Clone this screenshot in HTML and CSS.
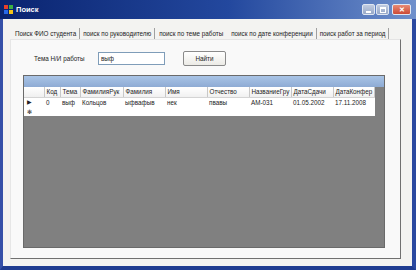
FILE: index.html
```html
<!DOCTYPE html>
<html lang="ru">
<head>
    <meta charset="UTF-8">
    <title>Поиск</title>
    <link rel="stylesheet" href="styles.css">
</head>
<body>

    <div class="window">
        <div class="titlebar">
            <svg class="app-icon" width="9" height="9" viewBox="0 0 9 9">
                <rect x="0" y="0" width="4" height="4" fill="#e8402a"/>
                <rect x="5" y="0" width="4" height="4" fill="#3cb043"/>
                <rect x="0" y="5" width="4" height="4" fill="#2a6ae8"/>
                <rect x="5" y="5" width="4" height="4" fill="#f5c518"/>
            </svg>
            <span class="title">Поиск</span>
            <div class="controls">
                <span class="ctl ctl-min"><span class="bar"></span></span>
                <span class="ctl ctl-max"><span class="box"></span></span>
                <span class="ctl ctl-close">&#x2715;</span>
            </div>
        </div>

        <div class="client">
            <div class="tabs">
                <span class="tab">Поиск ФИО студента</span>
                <span class="tab">поиск по руководителю</span>
                <span class="tab active">поиск по теме работы</span>
                <span class="tab">поиск по дате конференции</span>
                <span class="tab">поиск работ за период</span>
            </div>

            <div class="panel">
                <div class="search-row">
                    <span class="label">Тема Н/И работы</span>
                    <span class="input">выф</span>
                    <span class="button">Найти</span>
                </div>

                <div class="grid">
                    <div class="grid-caption"></div>
                    <table class="data">
                        <colgroup>
                            <col style="width:20px"><col style="width:16px"><col style="width:20px">
                            <col style="width:43px"><col style="width:42px"><col style="width:42px">
                            <col style="width:42px"><col style="width:42px"><col style="width:42px">
                            <col style="width:41px">
                        </colgroup>
                        <thead>
                            <tr>
                                <th class="rowhead"></th>
                                <th>Код</th>
                                <th>Тема</th>
                                <th>ФамилияРук</th>
                                <th>Фамилия</th>
                                <th>Имя</th>
                                <th>Отчество</th>
                                <th>НазваниеГру</th>
                                <th>ДатаСдачи</th>
                                <th>ДатаКонфер</th>
                            </tr>
                        </thead>
                        <tbody>
                            <tr>
                                <td class="rowhead">&#9654;</td>
                                <td>0</td>
                                <td>выф</td>
                                <td>Кольцов</td>
                                <td>ыфвафыв</td>
                                <td>нек</td>
                                <td>пвавы</td>
                                <td>АМ-031</td>
                                <td>01.05.2002</td>
                                <td>17.11.2008</td>
                            </tr>
                            <tr class="new-row">
                                <td class="rowhead">&#x273B;</td>
                                <td></td><td></td><td></td><td></td><td></td>
                                <td></td><td></td><td></td><td></td>
                            </tr>
                        </tbody>
                    </table>
                </div>
            </div>
        </div>
    </div>

</body>
</html>
```

FILE: styles.css
```css
* {
    box-sizing: border-box;
}

body {
    margin: 0;
    font-family: "Liberation Sans", Arial, sans-serif;
    font-size: 6.3px;
    color: #222;
    background: #ffffff;
}

.window {
    width: 416px;
    height: 270px;
    display: flex;
    flex-direction: column;
    border-left: 3px solid #3550a8;
    border-right: 4px solid #2a48a0;
    border-bottom: 4px solid #1f3c90;
    background: #f3f3f1;
}

/* Barra de titulo */
.titlebar {
    height: 19px;
    margin-left: -3px;
    margin-right: -4px;
    padding-left: 4px;
    display: flex;
    align-items: center;
    background: linear-gradient(to right, #0a2470, #23489e 55%, #6f90cc);
}

.app-icon {
    flex: none;
}

.title {
    margin-left: 3px;
    color: #ffffff;
    font-weight: bold;
    font-size: 7.5px;
}

.controls {
    margin-left: auto;
    margin-right: 5px;
    display: flex;
    gap: 1px;
}

.ctl {
    width: 13px;
    height: 11px;
    border: 1px solid #dfe6f2;
    border-radius: 2px;
    background: linear-gradient(#c0cbe0, #97a8c8);
    display: flex;
    align-items: center;
    justify-content: center;
}

.ctl-min .bar {
    width: 5px;
    height: 2px;
    margin-top: 4px;
    background: #ffffff;
}

.ctl-max .box {
    width: 6px;
    height: 6px;
    border: 1px solid #ffffff;
    border-top-width: 2px;
}

.ctl-close {
    width: 19px;
    margin-left: 2px;
    background: linear-gradient(#e88a74, #cc4a36);
    color: #ffffff;
    font-size: 7px;
    font-weight: bold;
}

/* Area cliente */
.client {
    flex: 1;
    padding: 9px 11px 7px 7px;
    display: flex;
    flex-direction: column;
}

.tabs {
    height: 11px;
    padding-left: 2px;
    display: flex;
    align-items: center;
}

.tab {
    height: 11px;
    padding: 0 3px;
    line-height: 11px;
    white-space: nowrap;
    border-right: 1px solid #a0a0a0;
}

.tab.active {
    padding: 0 4px;
    border-right-color: transparent;
}

.panel {
    flex: 1;
    background: #f9f9f9;
    border-top: 1px solid #e4e4e4;
    border-left: 1px solid #e6e6e6;
    border-right: 1px solid #707070;
    border-bottom: 1px solid #707070;
    padding: 11px 15px 10px 12px;
    display: flex;
    flex-direction: column;
}

.search-row {
    height: 15px;
    display: flex;
    align-items: center;
}

.label {
    margin-left: 11px;
    width: 64px;
}

.input {
    width: 67px;
    height: 13px;
    line-height: 11px;
    padding-left: 2px;
    background: #ffffff;
    border: 1px solid #7f9db9;
}

.button {
    margin-left: 18px;
    width: 43px;
    height: 15px;
    line-height: 13px;
    text-align: center;
    border: 1px solid #8a8a8a;
    border-radius: 2px;
    background: linear-gradient(#ffffff, #ecebe6);
}

/* Tabla de resultados */
.grid {
    margin-top: 9px;
    flex: 1;
    background: #808080;
    border: 1px solid #6a6a6a;
}

.grid-caption {
    height: 11px;
    background: linear-gradient(#a9c4e6, #8eabd4);
}

.data {
    table-layout: fixed;
    border-collapse: collapse;
    width: 350px;
    background: #ffffff;
}

.data th,
.data td {
    height: 10px;
    padding: 0 1px 0 2px;
    font-weight: normal;
    text-align: left;
    white-space: nowrap;
    overflow: hidden;
    line-height: 9px;
}

.data th {
    border-right: 1px solid #c8c8c8;
    border-bottom: 1px solid #d4d4d4;
    background: linear-gradient(#ffffff, #f0f0f0);
}

.data .rowhead {
    font-size: 6px;
    padding-left: 3px;
}

.new-row td {
    height: 9px;
}

.new-row .rowhead {
    font-size: 6px;
    font-family: "DejaVu Sans", sans-serif;
}
```
